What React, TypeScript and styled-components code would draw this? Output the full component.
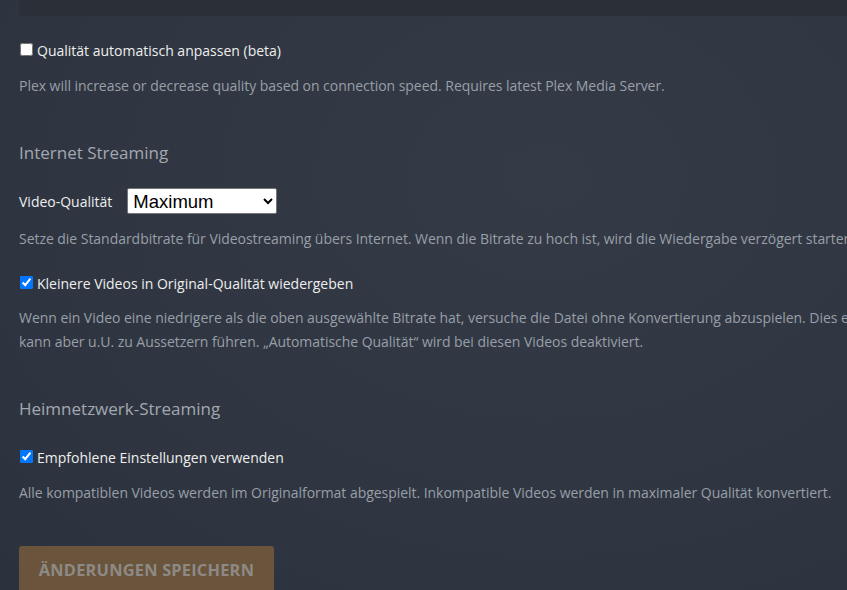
import styled, { createGlobalStyle } from "styled-components";

const GlobalStyle = createGlobalStyle`
  html, body {
    margin: 0;
    padding: 0;
    overflow: hidden;
    background: #313843;
  }
  body {
    font-family: "Open Sans", "Noto Sans", sans-serif;
    color: #eeeeee;
  }
`;

const Page = styled.div`
  width: 975px;
  height: 590px;
  padding-left: 19px;
  background: radial-gradient(ellipse at 55% 30%, #343b46 0%, #2f3641 60%, #2c323d 100%);
`;

const TopPanel = styled.div`
  height: 16px;
  background: #2a2f38;
`;

const Group = styled.div<{ $top?: number }>`
  padding-top: ${(p) => p.$top ?? 24}px;
`;

const CheckRow = styled.label`
  display: flex;
  align-items: center;
  gap: 4px;
  height: 20px;
  font-size: 14px;
  color: #eeeeee;

  input {
    margin: 0 0 0 1px;
    width: 13px;
    height: 13px;
    position: relative;
    top: -1px;
  }
`;

const Desc = styled.p<{ $top?: number }>`
  margin: 0;
  padding-top: ${(p) => p.$top ?? 13}px;
  font-size: 14px;
  line-height: 24px;
  letter-spacing: -0.04px;
  color: #999fa8;
`;

const Heading = styled.h2<{ $top?: number }>`
  margin: 0;
  padding-top: ${(p) => p.$top ?? 43}px;
  font-size: 17px;
  font-weight: 400;
  line-height: 24px;
  color: #a3a8b0;
`;

const SelectRow = styled.div`
  display: flex;
  align-items: center;
  gap: 15px;
  padding-top: 23px;
  font-size: 14px;
  color: #eeeeee;
`;

const Select = styled.select`
  width: 150px;
  height: 26px;
  font-family: "Liberation Sans", Arial, sans-serif;
  font-size: 18.5px;
  background: #ffffff;
  color: #000;
  border: 1px solid #767676;
  border-radius: 2px;
  padding: 0 1px;
`;

const SaveButton = styled.button`
  margin-top: 41px;
  width: 255px;
  height: 46px;
  border: none;
  border-radius: 3px;
  background: #6a543c;
  color: #8d8a86;
  font-family: "Open Sans", sans-serif;
  font-weight: 700;
  font-size: 16.4px;
  letter-spacing: 0.2px;
  text-transform: uppercase;
`;

export default function App() {
  return (
    <>
      <GlobalStyle />
      <Page>
        <TopPanel />
        <Group>
          <CheckRow>
            <input type="checkbox" />
            Qualität automatisch anpassen (beta)
          </CheckRow>
          <Desc $top={14}>
            Plex will increase or decrease quality based on connection speed. Requires latest Plex Media Server.
          </Desc>
        </Group>
        <Heading>Internet Streaming</Heading>
        <SelectRow>
          Video-Qualität
          <Select defaultValue="max">
            <option value="max">Maximum</option>
          </Select>
        </SelectRow>
        <Desc>
          Setze die Standardbitrate für Videostreaming übers Internet. Wenn die Bitrate zu hoch ist, wird die Wiedergabe verzögert starten.
        </Desc>
        <Group $top={22}>
          <CheckRow>
            <input type="checkbox" defaultChecked />
            Kleinere Videos in Original-Qualität wiedergeben
          </CheckRow>
          <Desc>
            Wenn ein Video eine niedrigere als die oben ausgewählte Bitrate hat, versuche die Datei ohne Konvertierung abzuspielen. Dies erhöht die Qualität,
            kann aber u.U. zu Aussetzern führen. „Automatische Qualität“ wird bei diesen Videos deaktiviert.
          </Desc>
        </Group>
        <Heading>Heimnetzwerk-Streaming</Heading>
        <Group $top={26}>
          <CheckRow>
            <input type="checkbox" defaultChecked />
            Empfohlene Einstellungen verwenden
          </CheckRow>
          <Desc $top={14}>
            Alle kompatiblen Videos werden im Originalformat abgespielt. Inkompatible Videos werden in maximaler Qualität konvertiert.
          </Desc>
        </Group>
        <SaveButton>Änderungen speichern</SaveButton>
      </Page>
    </>
  );
}
